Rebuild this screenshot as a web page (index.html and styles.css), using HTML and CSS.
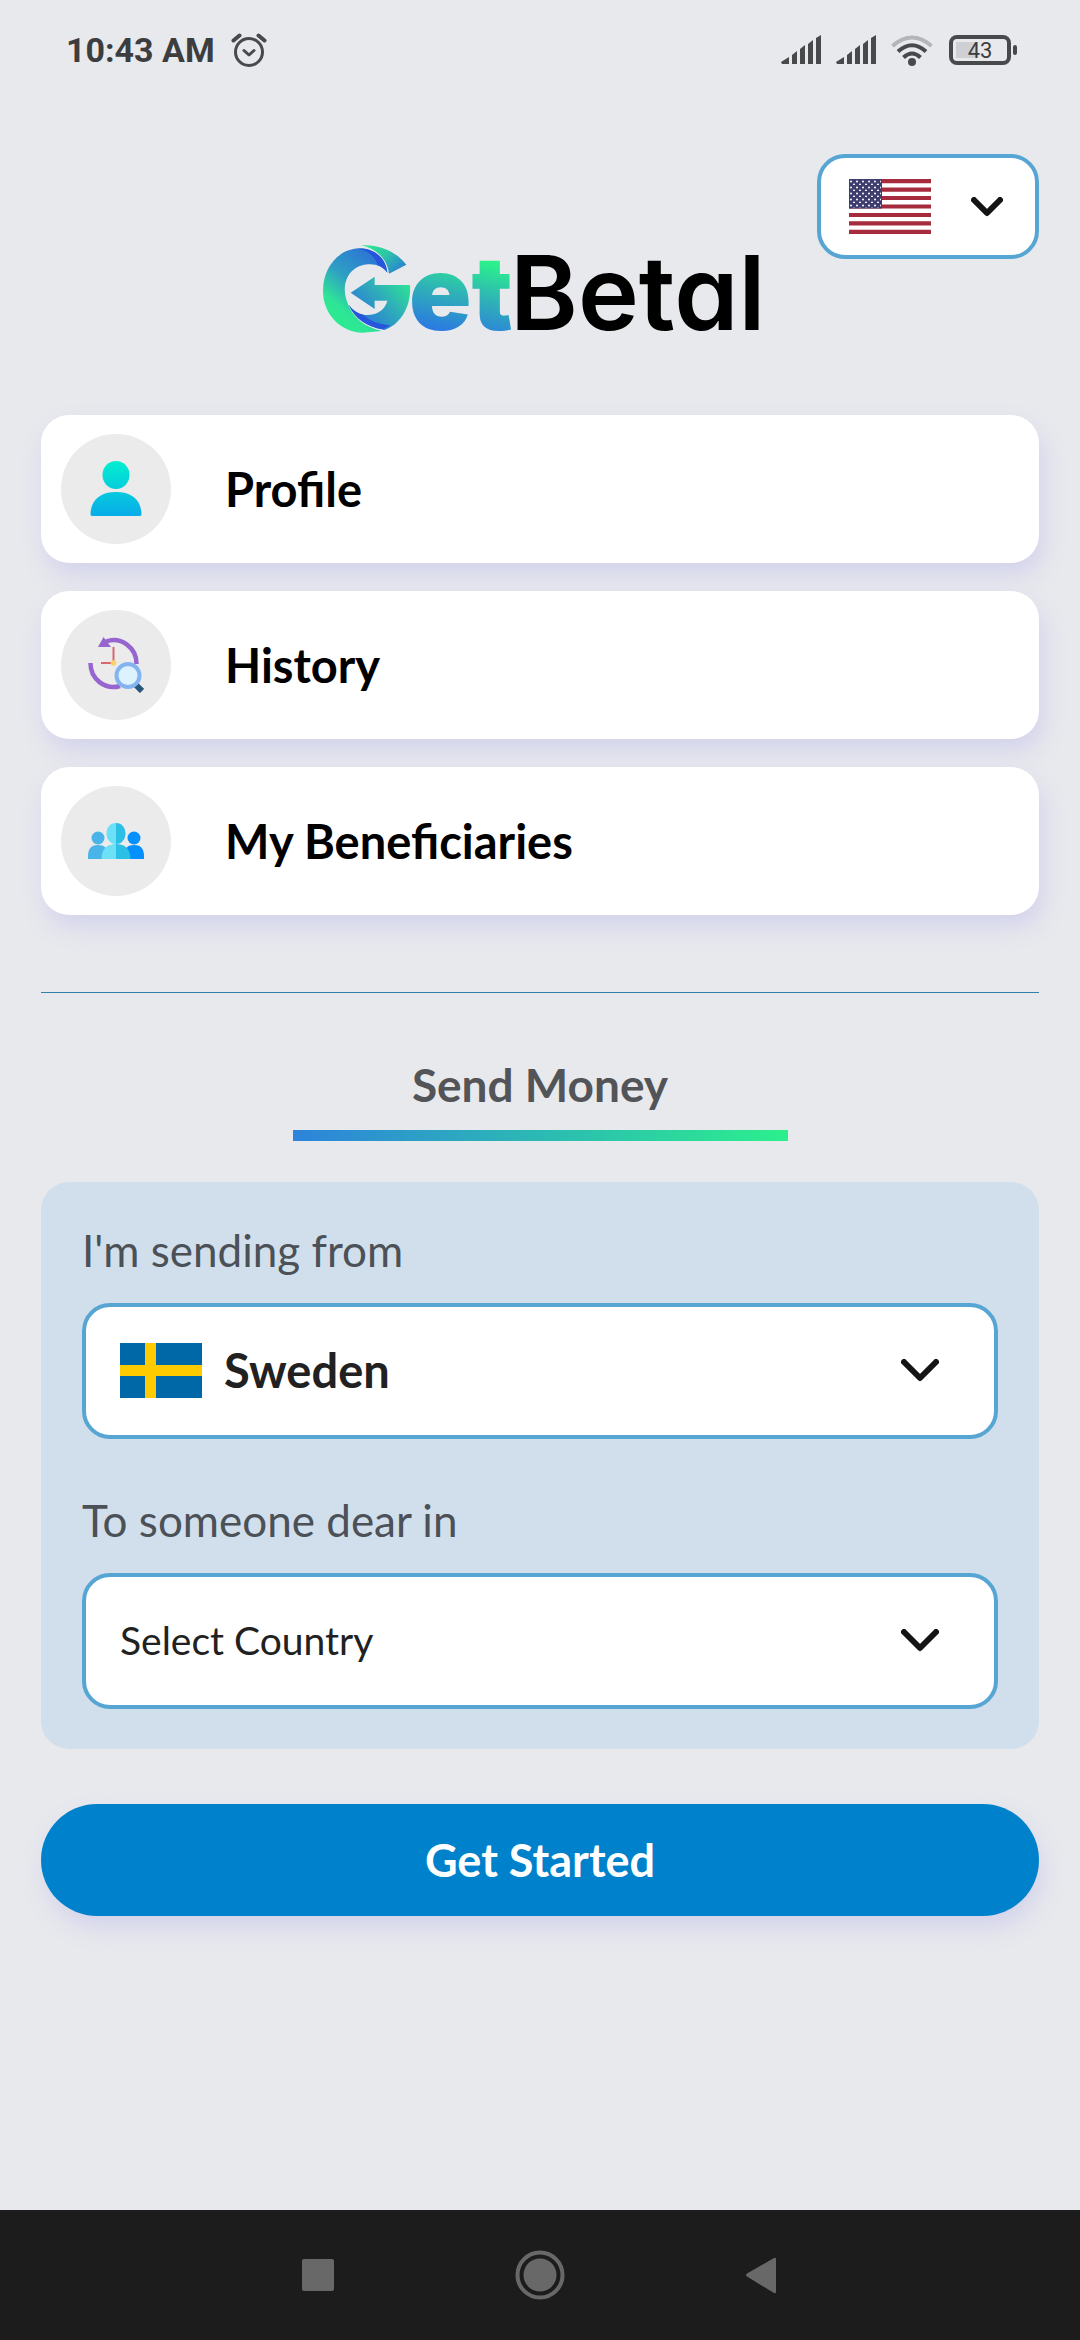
FILE: index.html
```html
<!DOCTYPE html>
<html lang="en">
<head>
<meta charset="utf-8">
<meta name="viewport" content="width=device-width, initial-scale=1">
<title>GetBetal</title>
<link rel="stylesheet" href="styles.css">
</head>
<body>
<div class="status-bar">
  <div class="status-group">
    <span class="clock">10:43 AM</span>
    <svg class="alarm" width="36" height="36" viewBox="0 0 36 36" fill="none" stroke="#48494b" stroke-width="3" stroke-linecap="round" stroke-linejoin="round" aria-hidden="true"><circle cx="18" cy="20" r="13.5"/><path d="M13 18.500l5 4.500 5-4.500"/><path d="M2.500 8.500l6-5M33.500 8.500l-6-5" stroke-width="4"/></svg>
  </div>
  <div class="status-group status-icons">
    <svg width="41" height="30" viewBox="0 0 41 30" fill="#48494b" aria-hidden="true"><path d="M0 27l8-5v7H1zM11 20l5-4v13h-5zM19 14l5-4v19h-5zM27 9l5-4v24h-5zM35 3l5-3v29h-5z"/></svg>
    <svg width="41" height="30" viewBox="0 0 41 30" fill="#48494b" aria-hidden="true"><path d="M0 27l8-5v7H1zM11 20l5-4v13h-5zM19 14l5-4v19h-5zM27 9l5-4v24h-5zM35 3l5-3v29h-5z"/></svg>
    <svg class="wifi" width="42" height="31" viewBox="0 0 42 31" fill="none" stroke="#48494b" stroke-width="4" aria-hidden="true"><path d="M1.500 11Q21-6 40.500 11" stroke="#b4b5b8"/><path d="M7 16.500Q21 4 35 16.500M12.500 22.500Q21 14.500 29.500 22.500"/><circle cx="21" cy="27" r="4" fill="#48494b" stroke="none"/></svg>
    <span class="battery"><span class="battery-level">43</span></span>
  </div>
</div>

<main class="page">
  <header class="header">
    <svg class="logo" width="434" height="88" viewBox="0 0 434 88" role="img" aria-label="GetBetal">
      <defs>
        <linearGradient id="ring" x1="0.8" y1="0" x2="0.2" y2="1"><stop offset="0" stop-color="#2b6fd8"/><stop offset=".45" stop-color="#2f9fc4"/><stop offset=".75" stop-color="#2ee596"/><stop offset="1" stop-color="#2bee8e"/></linearGradient>
        <linearGradient id="arrow" x1="1" y1="0" x2="0.1" y2="0.7"><stop offset="0" stop-color="#2bf08c"/><stop offset=".5" stop-color="#2fafb8"/><stop offset="1" stop-color="#2b77da"/></linearGradient>
        <linearGradient id="cap" x1="0" y1="0" x2="1" y2=".7"><stop offset="0" stop-color="#2bf08c"/><stop offset=".5" stop-color="#2cc8a6"/><stop offset="1" stop-color="#2b82d2"/></linearGradient>
        <linearGradient id="word" gradientUnits="userSpaceOnUse" x1="148" y1="14" x2="132" y2="88"><stop offset="0" stop-color="#2bf08c"/><stop offset=".5" stop-color="#2fb0b8"/><stop offset="1" stop-color="#2b7be0"/></linearGradient>
      </defs>
      <svg width="88" height="88" viewBox="42 43 264 264">
        <path fill="url(#ring)" d="M235 126C230 78 192 52 150 53C86 56 42 112 42 180C42 252 96 304 160 306L218 301C168 290 132 262 116 218C92 160 120 104 178 101C204 100 222 108 235 126Z"/>
        <path fill="#2556dc" d="M235 126C230 78 192 52 148 54C184 62 198 80 206 104C218 108 228 116 235 126Z"/>
        <path fill="url(#cap)" d="M156 44C214 40 262 64 292 102L240 129C236 94 212 56 156 44Z"/>
        <path fill="url(#arrow)" d="M125 186L197 138V163H303C308 232 270 284 226 298C172 288 136 262 119 222C140 252 170 258 196 250C216 244 230 230 235 210H197V235Z"/>
        <path fill="#2556dc" d="M119 222C136 262 172 288 222 296C232 292 238 288 244 284C202 280 178 268 164 253C146 248 130 238 119 222Z"/>
      </svg>
      <text class="logo-get" x="86" y="85" fill="url(#word)">et</text>
      <text class="logo-betal" x="187" y="85">Betal</text>
    </svg>
    <div class="select-box language">
      <svg class="flag" width="82" height="55" viewBox="0 0 82 55" aria-hidden="true">
        <defs><pattern id="stars" width="6" height="6" patternUnits="userSpaceOnUse"><circle cx="2" cy="2.500" r="1" fill="#fff"/><circle cx="5" cy="5.500" r="1" fill="#fff"/></pattern></defs>
        <path fill="#fff" d="M0 0h82v55H0z"/>
        <path stroke="#a62b3c" stroke-width="4.230" d="M0 2.100h82M0 10.600h82M0 19h82M0 27.500h82M0 36h82M0 44.400h82M0 52.900h82"/>
        <path fill="#3e3d70" d="M0 0h33v29.600H0z"/><path fill="url(#stars)" d="M0 0h32v29H0z"/>
      </svg>
      <select class="select" aria-label="Language"><option value="en-US"></option></select>
      <svg class="chevron" width="32" height="20" viewBox="0 0 32 20" aria-hidden="true"><path d="M3 3l13 13L29 3"/></svg>
    </div>
  </header>

  <nav class="menu">
    <a class="card" href="#profile">
      <span class="card-icon"><svg width="52" height="56" viewBox="0 0 52 56" aria-hidden="true"><defs><linearGradient id="user" gradientUnits="userSpaceOnUse" x1="26" y1="0" x2="26" y2="56"><stop offset="0" stop-color="#03efd0"/><stop offset="1" stop-color="#08abe9"/></linearGradient></defs><g fill="url(#user)"><ellipse cx="26" cy="14" rx="13.500" ry="14"/><path d="M2 55Q.500 55 .500 53C1 38 11 31 26 31S51 38 51.500 53Q51.500 55 50 55Z"/></g></svg></span>
      Profile
    </a>
    <a class="card" href="#history">
      <span class="card-icon"><svg width="56" height="56" viewBox="0 0 56 56" fill="none" aria-hidden="true"><path stroke="#9765cf" stroke-width="4.500" d="M18 4.500A23 23.500 0 0 1 48.500 27M2.500 26A23 23.500 0 0 0 32 49"/><path fill="#9765cf" d="M10 10L15.500 0l7.500 10z"/><path stroke="#d9676c" stroke-width="2" d="M25.500 10v14M13 26h11"/><circle cx="25.500" cy="26" r="2.800" fill="#fbd268"/><path stroke="#28557b" stroke-width="6" d="M48 48l6 6"/><circle cx="40" cy="38.500" r="11.500" fill="#ddf2ff" stroke="#84b4ef" stroke-width="4"/></svg></span>
      History
    </a>
    <a class="card" href="#beneficiaries">
      <span class="card-icon"><svg width="56" height="36" viewBox="0 0 56 36" aria-hidden="true"><g fill="#49b4e8"><circle cx="10" cy="15" r="6.500"/><path d="M0 36v-3c0-8 4-11 10-11s10 3 10 11v3z"/></g><g fill="#0590ff"><circle cx="46" cy="15" r="6.500"/><path d="M36 36v-3c0-8 4-11 10-11s10 3 10 11v3z"/></g><path fill="#6be0f6" d="M28 0c-6 0-9.500 5-9.500 10.500S22 21 28 21zM28 21c-9 0-14.500 5-14.500 15H28z"/><path fill="#2bbfe5" d="M28 0c6 0 9.500 5 9.500 10.500S34 21 28 21zM28 21c9 0 14.500 5 14.500 15H28z"/></svg></span>
      My Beneficiaries
    </a>
  </nav>

  <hr class="divider">

  <h1 class="title">Send Money</h1>

  <form class="transfer">
    <div class="panel">
      <label class="label" for="from">I'm sending from</label>
      <div class="select-box">
        <svg class="flag" width="82" height="55" viewBox="0 0 82 55" aria-hidden="true"><path fill="#0068a7" d="M0 0h82v55H0z"/><path fill="#fecb00" d="M25 0h11v55H25zM0 22h82v11H0z"/></svg>
        <select class="select select-chosen" id="from"><option>Sweden</option></select>
        <svg class="chevron" width="38" height="23" viewBox="0 0 38 23" aria-hidden="true"><path d="M3 3l16 16L35 3"/></svg>
      </div>
      <label class="label label-second" for="to">To someone dear in</label>
      <div class="select-box">
        <select class="select" id="to"><option>Select Country</option></select>
        <svg class="chevron" width="38" height="23" viewBox="0 0 38 23" aria-hidden="true"><path d="M3 3l16 16L35 3"/></svg>
      </div>
    </div>
    <button class="submit" type="button">Get Started</button>
  </form>
</main>

<div class="system-nav">
  <button class="nav-key" type="button" aria-label="Recent apps"><svg width="50" height="50" viewBox="0 0 50 50" aria-hidden="true"><rect x="9" y="9" width="32" height="32" rx="2"/></svg></button>
  <button class="nav-key" type="button" aria-label="Home"><svg width="50" height="50" viewBox="0 0 50 50" aria-hidden="true"><circle cx="25" cy="25" r="16.500"/><circle cx="25" cy="25" r="22.500" fill="none" stroke="#686868" stroke-width="4"/></svg></button>
  <button class="nav-key" type="button" aria-label="Back"><svg width="50" height="50" viewBox="0 0 50 50" aria-hidden="true"><path d="M10 26.500q-2-1.500 0-3L37 8q2-1 2 1v33q0 2-2 1z"/></svg></button>
</div>
</body>
</html>
```
FILE: styles.css
```css
* {
  box-sizing: border-box;
}

body {
  margin: 0;
  min-height: 100vh;
  display: flex;
  flex-direction: column;
  background: #e8e9ed;
  color: #000;
  font-family: Lato, "Open Sans", sans-serif;
}

.status-bar {
  display: flex;
  justify-content: space-between;
  align-items: center;
  height: 100px;
  padding: 0 63px 0 66px;
  color: #3c3d3f;
  font-family: Roboto, sans-serif;
}

.status-group {
  display: flex;
  align-items: center;
  gap: 16px;
}

.clock {
  font-size: 34px;
  font-weight: 700;
}

.status-icons {
  gap: 14px;
}

.battery {
  position: relative;
  width: 62px;
  height: 30px;
  margin: 0 6px 0 2px;
  padding: 3px;
  border: 4px solid #48494b;
  border-radius: 8px;
}

.battery::after {
  content: "";
  position: absolute;
  right: -10px;
  top: 6px;
  width: 4px;
  height: 10px;
  border-radius: 2px;
  background: #48494b;
}

.battery-level {
  display: block;
  height: 16px;
  background: linear-gradient(90deg, #cfd0d3 43%, #e8e9ed 43%);
  font-size: 22px;
  line-height: 18px;
  text-align: center;
}

.page {
  flex: 1;
  padding: 54px 41px 60px;
}

.header {
  display: grid;
  grid-template-columns: 1fr auto 1fr;
  height: 179px;
}

.logo {
  grid-column: 2;
  align-self: end;
  overflow: visible;
}

.logo-get,
.logo-betal {
  font-family: Inter, sans-serif;
  font-size: 103px;
  font-feature-settings: "cv11";
}

.logo-get {
  font-weight: 900;
}

.logo-betal {
  font-weight: 600;
}

.select-box {
  position: relative;
  display: flex;
  align-items: center;
  gap: 22px;
  height: 136px;
  padding: 0 55px 2px 34px;
  border: 4px solid #57a5d3;
  border-radius: 28px;
  background: #fff;
}

.language {
  justify-self: end;
  width: 222px;
  height: 105px;
  gap: 0;
  padding: 0 32px 0 28px;
}

.flag {
  flex: none;
}

.select {
  flex: 1;
  min-width: 0;
  height: 100%;
  padding: 0;
  border: 0;
  appearance: none;
  background: transparent;
  color: #212121;
  font-family: inherit;
  font-size: 39px;
}

.select-chosen {
  font-size: 47px;
  font-weight: 700;
}

.chevron {
  flex: none;
  fill: none;
  stroke: #141414;
  stroke-width: 6;
  stroke-linecap: round;
  stroke-linejoin: round;
  pointer-events: none;
}

.menu {
  display: grid;
  gap: 28px;
  margin-top: 82px;
}

.card {
  display: flex;
  align-items: center;
  gap: 54px;
  height: 148px;
  padding: 0 20px;
  border-radius: 28px;
  background: #fff;
  box-shadow: 4px 12px 24px #d3d3ec;
  color: inherit;
  font-size: 47px;
  font-weight: 700;
  text-decoration: none;
}

.card-icon {
  display: grid;
  place-items: center;
  width: 110px;
  height: 110px;
  border-radius: 50%;
  background: #ebebeb;
}

.divider {
  height: 1px;
  margin: 77px 0 0;
  border: 0;
  background: #2f7fa8;
}

.title {
  width: 495px;
  margin: 64px auto 41px;
  padding-bottom: 18px;
  border-bottom: 11px solid;
  border-image: linear-gradient(90deg, #2d83db, #2bf08c) 1;
  color: #535457;
  font-size: 46px;
  font-weight: 700;
  line-height: 55px;
  text-align: center;
}

.panel {
  padding: 41px 41px 40px;
  border-radius: 28px;
  background: #d0dfeb;
}

.label {
  display: block;
  margin-bottom: 26px;
  color: #4c5057;
  font-size: 44px;
  line-height: 54px;
}

.label-second {
  margin-top: 54px;
}

.submit {
  display: block;
  width: 100%;
  height: 112px;
  margin-top: 55px;
  border: 0;
  border-radius: 56px;
  background: #0081cb;
  box-shadow: 4px 12px 24px #d3d3ec;
  color: #fff;
  font-family: inherit;
  font-size: 45px;
  font-weight: 700;
}

.system-nav {
  display: flex;
  justify-content: center;
  align-items: center;
  gap: 172px;
  height: 130px;
  background: #1c1c1c;
}

.nav-key {
  display: block;
  width: 50px;
  height: 50px;
  padding: 0;
  border: 0;
  background: none;
  fill: #686868;
}
```
